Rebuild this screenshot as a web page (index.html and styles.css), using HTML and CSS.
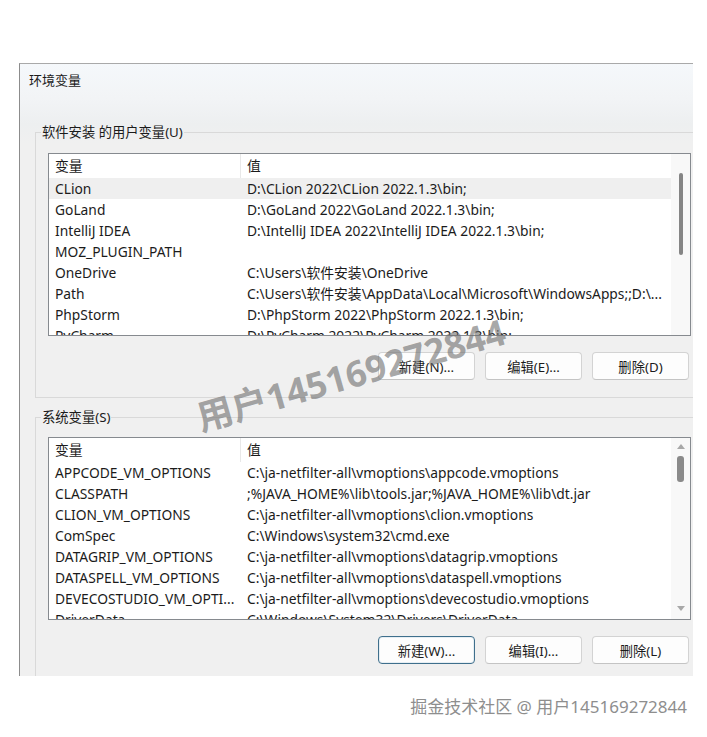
FILE: index.html
```html
<!DOCTYPE html>
<html>
<head>
  <title>环境变量</title>
  <link rel="stylesheet" href="styles.css">
</head>
<body>
  <div class="page">
    <div class="dialog">
      <div class="dialog-title">环境变量</div>

      <fieldset class="group">
        <legend>软件安装 的用户变量(U)</legend>
        <div class="list">
          <div class="list-view">
            <div class="list-head"><span class="col-name">变量</span><span class="col-value">值</span></div>
            <div class="list-row selected"><span class="col-name">CLion</span><span class="col-value">D:\CLion 2022\CLion 2022.1.3\bin;</span></div>
            <div class="list-row"><span class="col-name">GoLand</span><span class="col-value">D:\GoLand 2022\GoLand 2022.1.3\bin;</span></div>
            <div class="list-row"><span class="col-name">IntelliJ IDEA</span><span class="col-value">D:\IntelliJ IDEA 2022\IntelliJ IDEA 2022.1.3\bin;</span></div>
            <div class="list-row"><span class="col-name">MOZ_PLUGIN_PATH</span><span class="col-value"></span></div>
            <div class="list-row"><span class="col-name">OneDrive</span><span class="col-value">C:\Users\软件安装\OneDrive</span></div>
            <div class="list-row"><span class="col-name">Path</span><span class="col-value">C:\Users\软件安装\AppData\Local\Microsoft\WindowsApps;;D:\...</span></div>
            <div class="list-row"><span class="col-name">PhpStorm</span><span class="col-value">D:\PhpStorm 2022\PhpStorm 2022.1.3\bin;</span></div>
            <div class="list-row"><span class="col-name">PyCharm</span><span class="col-value">D:\PyCharm 2022\PyCharm 2022.1.3\bin;</span></div>
          </div>
          <div class="scroll scroll-thin">
            <div class="thumb"></div>
          </div>
        </div>
        <div class="actions">
          <button class="btn">新建(N)...</button>
          <button class="btn">编辑(E)...</button>
          <button class="btn">删除(D)</button>
        </div>
      </fieldset>

      <fieldset class="group group-system">
        <legend>系统变量(S)</legend>
        <div class="list">
          <div class="list-view">
            <div class="list-head"><span class="col-name">变量</span><span class="col-value">值</span></div>
            <div class="list-row"><span class="col-name">APPCODE_VM_OPTIONS</span><span class="col-value">C:\ja-netfilter-all\vmoptions\appcode.vmoptions</span></div>
            <div class="list-row"><span class="col-name">CLASSPATH</span><span class="col-value">;%JAVA_HOME%\lib\tools.jar;%JAVA_HOME%\lib\dt.jar</span></div>
            <div class="list-row"><span class="col-name">CLION_VM_OPTIONS</span><span class="col-value">C:\ja-netfilter-all\vmoptions\clion.vmoptions</span></div>
            <div class="list-row"><span class="col-name">ComSpec</span><span class="col-value">C:\Windows\system32\cmd.exe</span></div>
            <div class="list-row"><span class="col-name">DATAGRIP_VM_OPTIONS</span><span class="col-value">C:\ja-netfilter-all\vmoptions\datagrip.vmoptions</span></div>
            <div class="list-row"><span class="col-name">DATASPELL_VM_OPTIONS</span><span class="col-value">C:\ja-netfilter-all\vmoptions\dataspell.vmoptions</span></div>
            <div class="list-row"><span class="col-name">DEVECOSTUDIO_VM_OPTI...</span><span class="col-value">C:\ja-netfilter-all\vmoptions\devecostudio.vmoptions</span></div>
            <div class="list-row"><span class="col-name">DriverData</span><span class="col-value">C:\Windows\System32\Drivers\DriverData</span></div>
          </div>
          <div class="scroll scroll-full">
            <div class="arrow-up"></div>
            <div class="thumb"></div>
            <div class="arrow-down"></div>
          </div>
        </div>
        <div class="actions">
          <button class="btn btn-focus">新建(W)...</button>
          <button class="btn">编辑(I)...</button>
          <button class="btn">删除(L)</button>
        </div>
      </fieldset>
    </div>

    <div class="credit">掘金技术社区 @ 用户145169272844</div>
    <div class="watermark">用户145169272844</div>
  </div>
</body>
</html>
```

FILE: styles.css
```css
body {
  margin: 0;
  padding: 0;
  background-color: #fff;
  font-family: "Noto Sans", "Noto Sans CJK SC", sans-serif;
  font-size: 13px;
  color: #1b1b1b;
}

.page {
  position: relative;
  padding-top: 63px;
}

.dialog {
  width: 673px;
  height: 612px;
  margin-left: 19px;
  border-top: 1px solid #a9a9a9;
  border-left: 1px solid #8c8c8c;
  overflow: hidden;
  background: linear-gradient(to bottom, #f5f8fb 0, #f2f4f6 34px, #edeff0 60px, #f0f0f0 80px);
}

.dialog-title {
  height: 34px;
  line-height: 33px;
  padding-left: 9px;
}

.group {
  width: 643px;
  margin: 25px 0 0 15px;
  padding: 12px 12px 17px 12px;
  border: 1px solid #d9d9d9;
  min-width: 0;
}

.group legend {
  margin-left: -7px;
  padding: 0 1px;
  line-height: 18px;
  font-size: 13.3px;
}

.group-system {
  margin-top: 10px;
  padding-top: 11px;
}

/* list view */
.list {
  display: flex;
  height: 181px;
  border: 1px solid #868a8f;
  background-color: #fff;
  font-size: 13.8px;
}

.list-view {
  flex: 1;
  overflow: hidden;
}

.list-head,
.list-row {
  display: flex;
  white-space: nowrap;
}

.list-head {
  height: 24px;
  line-height: 24px;
}

.list-row {
  height: 21px;
  line-height: 21px;
}

.list-row.selected {
  background-color: #efefef;
}

.col-name {
  flex: none;
  width: 185px;
  padding-left: 6px;
  border-right: 1px solid transparent;
  overflow: hidden;
}

.list-head .col-name {
  border-right-color: #e8e8e8;
}

.col-value {
  flex: 1;
  padding-left: 6px;
  overflow: hidden;
}

/* scrollbars */
.scroll {
  width: 19px;
  background-color: #f8f8f8;
  display: flex;
  flex-direction: column;
  align-items: center;
}

.scroll-thin {
  padding-top: 19px;
}

.scroll-thin .thumb {
  width: 4px;
  height: 82px;
  border-radius: 2px;
  background-color: #858585;
}

.scroll-full {
  padding: 6px 0 8px;
}

.scroll-full .thumb {
  width: 7px;
  height: 26px;
  margin-top: 7px;
  border-radius: 3px;
  background-color: #8a8a8a;
}

.arrow-up,
.arrow-down {
  width: 0;
  height: 0;
  border-left: 4px solid transparent;
  border-right: 4px solid transparent;
}

.arrow-up {
  border-bottom: 5px solid #a8a8a8;
}

.arrow-down {
  margin-top: auto;
  border-top: 5px solid #a8a8a8;
}

/* buttons */
.actions {
  display: flex;
  justify-content: flex-end;
  gap: 10px;
  margin-top: 16px;
  padding-right: 2px;
}

.btn {
  width: 97px;
  height: 28px;
  padding: 0;
  font-family: "Noto Sans", "Noto Sans CJK SC", sans-serif;
  font-size: 13.3px;
  color: #1b1b1b;
  background-color: #fdfdfd;
  border: 1px solid #d3d3d3;
  border-bottom-color: #c4c4c4;
  border-radius: 4px;
}

.btn-focus {
  border: 1px solid #3f6f8c;
  box-shadow: inset 0 0 0 1px #e6eef3;
}

.credit {
  margin-top: 21px;
  padding-right: 20px;
  text-align: right;
  font-size: 17px;
  line-height: 20px;
  color: #8e8e8e;
}

.watermark {
  position: absolute;
  left: 351px;
  top: 375px;
  transform: translate(-50%, -50%) rotate(-16deg);
  font-size: 36px;
  font-weight: bold;
  line-height: 1;
  white-space: nowrap;
  color: rgba(110, 110, 110, 0.62);
}
```
